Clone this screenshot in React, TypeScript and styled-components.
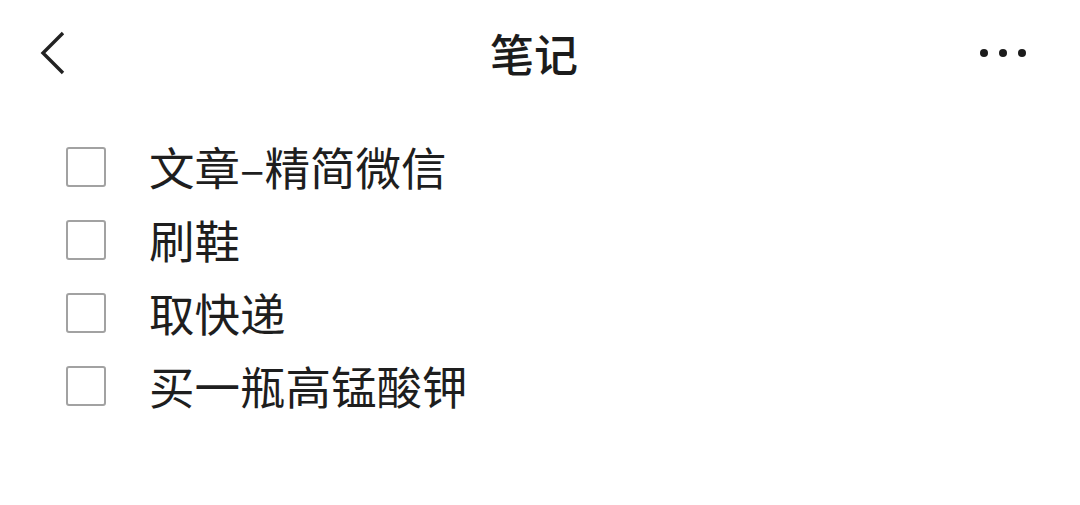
import styled, { createGlobalStyle } from "styled-components";

const GlobalStyle = createGlobalStyle`
  body {
    margin: 0;
    background: #ffffff;
    font-family: "Noto Sans CJK SC", "Noto Sans", sans-serif;
    color: #222222;
  }
`;

const Page = styled.div`
  width: 1080px;
  height: 505px;
  display: flex;
  flex-direction: column;
  background: #ffffff;
`;

const Header = styled.div`
  height: 106px;
  display: grid;
  grid-template-columns: 120px 1fr 120px;
  align-items: center;
`;

const BackButton = styled.div`
  display: flex;
  align-items: center;
  padding-left: 38px;
`;

const Title = styled.div`
  text-align: center;
  font-size: 44px;
  font-weight: 500;
  color: #1c1c1c;
  padding-right: 12px;
`;

const More = styled.div`
  display: flex;
  justify-content: flex-end;
  gap: 11px;
  padding-right: 54px;
`;

const Dot = styled.span`
  width: 8px;
  height: 8px;
  border-radius: 50%;
  background: #1c1c1c;
`;

const List = styled.ul`
  list-style: none;
  margin: 0;
  padding: 24px 0 0 66px;
  display: flex;
  flex-direction: column;
`;

const Item = styled.li`
  height: 73px;
  display: flex;
  align-items: center;
  gap: 43px;
`;

const Box = styled.span`
  width: 36px;
  height: 36px;
  border: 2.5px solid #a2a2a2;
  border-radius: 3px;
  flex-shrink: 0;
`;

const Label = styled.span`
  font-size: 45.5px;
  color: #1e1e1e;
  line-height: 1;
`;

const items = ["文章–精简微信", "刷鞋", "取快递", "买一瓶高锰酸钾"];

export default function App() {
  return (
    <Page>
      <GlobalStyle />
      <Header>
        <BackButton>
          <svg width="30" height="46" viewBox="0 0 30 46">
            <path d="M25 3 L5 23 L25 43" fill="none" stroke="#222" strokeWidth="3.4" />
          </svg>
        </BackButton>
        <Title>笔记</Title>
        <More>
          <Dot />
          <Dot />
          <Dot />
        </More>
      </Header>
      <List>
        {items.map((t) => (
          <Item key={t}>
            <Box />
            <Label>{t}</Label>
          </Item>
        ))}
      </List>
    </Page>
  );
}
